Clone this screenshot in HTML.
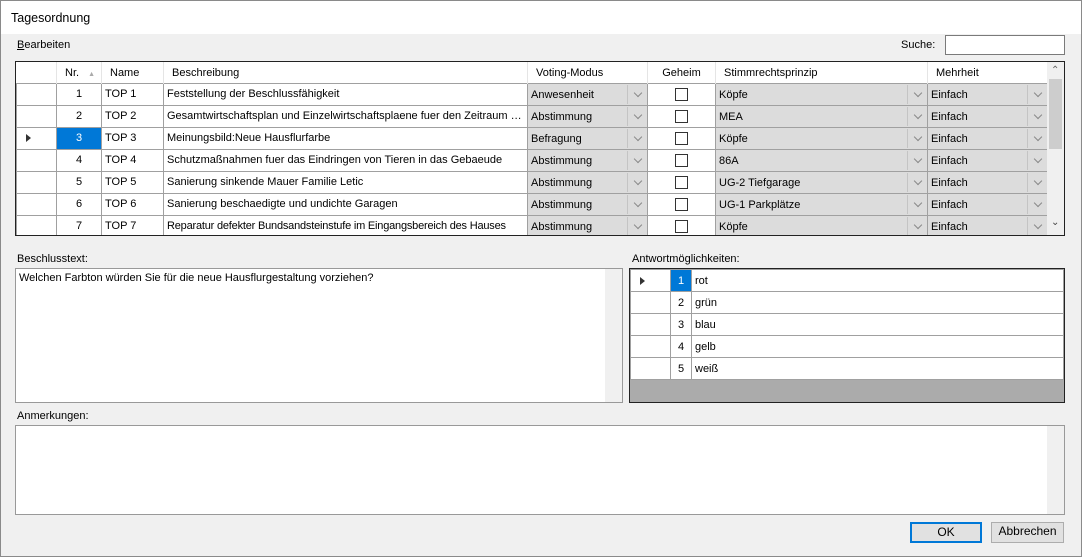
<!DOCTYPE html>
<html><head><meta charset="utf-8"><style>
*{box-sizing:border-box;margin:0;padding:0}
body{width:1082px;height:557px;background:#f0f0f0;font-family:"Liberation Sans",sans-serif;font-size:11px;color:#000;position:relative;overflow:hidden}
.a{position:absolute}
table{border-collapse:collapse;table-layout:fixed}
td{border:1px solid #a0a0a0;height:22px;padding:0 3px;white-space:nowrap;overflow:hidden;text-overflow:ellipsis;vertical-align:middle}
.dd{background:#dcdcdc;border:1px solid #a0a0a0;position:relative;padding:0}
.dd span{position:absolute;left:3px;top:5px}
.dd i{position:absolute;right:0;top:1px;bottom:1px;width:20px;border-left:1px solid #c4c4c4;background:#dcdcdc}
.dd i:after{content:"";position:absolute;left:7px;top:5px;width:5px;height:5px;border-right:1px solid #888;border-bottom:1px solid #888;transform:rotate(45deg)}
.cb{width:13px;height:13px;border:1px solid #333;background:#fff;margin:auto}
.hd td{border:none;border-right:1px solid #e5e5e5;height:21px;background:#fff;text-overflow:clip;padding-top:2px}
.sel{background:#0078d7;color:#fff}
.tri{width:0;height:0;border-left:5px solid #333;border-top:4px solid transparent;border-bottom:4px solid transparent;margin-left:6px}
.btn{border:1px solid #adadad;background:#e1e1e1;text-align:center;line-height:17px;font-size:12px}
</style></head><body>
<div class="a" style="left:0;top:0;width:1082px;height:34px;background:#fff"></div>
<div class="a" style="left:0;top:0;width:1082px;height:557px;border:1px solid #8a8a8a;z-index:5;pointer-events:none"></div>
<div class="a" style="left:11px;top:11px;font-size:12.5px">Tagesordnung</div>
<div class="a" style="left:17px;top:39px"><u>B</u>earbeiten</div>
<div class="a" style="left:901px;top:39px">Suche:</div>
<div class="a" style="left:945px;top:35px;width:120px;height:20px;background:#fff;border:1px solid #7a7a7a"></div>

<div class="a" style="left:15px;top:61px;width:1050px;height:175px;border:1px solid #222;background:#fff;overflow:hidden">
<table style="width:1031px">
<colgroup><col style="width:40px"><col style="width:45px"><col style="width:62px"><col style="width:364px"><col style="width:120px"><col style="width:68px"><col style="width:212px"><col style="width:120px"></colgroup>
<tr class="hd"><td></td><td style="padding-left:8px">Nr.<span style="color:#aaa;font-size:7px;margin-left:9px">▲</span></td><td style="padding-left:8px">Name</td><td style="padding-left:8px">Beschreibung</td><td style="padding-left:8px">Voting-Modus</td><td style="text-align:center">Geheim</td><td style="padding-left:8px">Stimmrechtsprinzip</td><td style="padding-left:8px">Mehrheit</td></tr>
<tr><td></td><td style="text-align:center">1</td><td>TOP 1</td><td>Feststellung der Beschlussfähigkeit</td><td class="dd"><span>Anwesenheit</span><i></i></td><td><div class="cb"></div></td><td class="dd"><span>Köpfe</span><i></i></td><td class="dd"><span>Einfach</span><i></i></td></tr>
<tr><td></td><td style="text-align:center">2</td><td>TOP 2</td><td>Gesamtwirtschaftsplan und Einzelwirtschaftsplaene fuer den Zeitraum 01.01.2021</td><td class="dd"><span>Abstimmung</span><i></i></td><td><div class="cb"></div></td><td class="dd"><span>MEA</span><i></i></td><td class="dd"><span>Einfach</span><i></i></td></tr>
<tr><td><div class="tri"></div></td><td class="sel" style="text-align:center">3</td><td>TOP 3</td><td>Meinungsbild:Neue Hausflurfarbe</td><td class="dd"><span>Befragung</span><i></i></td><td><div class="cb"></div></td><td class="dd"><span>Köpfe</span><i></i></td><td class="dd"><span>Einfach</span><i></i></td></tr>
<tr><td></td><td style="text-align:center">4</td><td>TOP 4</td><td>Schutzmaßnahmen fuer das Eindringen von Tieren in das Gebaeude</td><td class="dd"><span>Abstimmung</span><i></i></td><td><div class="cb"></div></td><td class="dd"><span>86A</span><i></i></td><td class="dd"><span>Einfach</span><i></i></td></tr>
<tr><td></td><td style="text-align:center">5</td><td>TOP 5</td><td>Sanierung sinkende Mauer Familie Letic</td><td class="dd"><span>Abstimmung</span><i></i></td><td><div class="cb"></div></td><td class="dd"><span>UG-2 Tiefgarage</span><i></i></td><td class="dd"><span>Einfach</span><i></i></td></tr>
<tr><td></td><td style="text-align:center">6</td><td>TOP 6</td><td>Sanierung beschaedigte und undichte Garagen</td><td class="dd"><span>Abstimmung</span><i></i></td><td><div class="cb"></div></td><td class="dd"><span>UG-1 Parkplätze</span><i></i></td><td class="dd"><span>Einfach</span><i></i></td></tr>
<tr><td></td><td style="text-align:center">7</td><td>TOP 7</td><td style="letter-spacing:-0.2px">Reparatur defekter Bundsandsteinstufe im Eingangsbereich des Hauses</td><td class="dd"><span>Abstimmung</span><i></i></td><td><div class="cb"></div></td><td class="dd"><span>Köpfe</span><i></i></td><td class="dd"><span>Einfach</span><i></i></td></tr>
</table>
<div class="a" style="left:1031px;top:0;width:17px;height:173px;background:#f0f0f0"></div>
<div class="a" style="left:1033px;top:17px;width:13px;height:70px;background:#cdcdcd"></div>
<div class="a" style="left:1035px;top:3px;font-size:10px;color:#666">⌃</div>
<div class="a" style="left:1035px;top:155px;font-size:10px;color:#444">⌄</div>
</div>

<div class="a" style="left:17px;top:253px">Beschlusstext:</div>
<div class="a" style="left:15px;top:268px;width:608px;height:135px;background:#fff;border:1px solid #999"><div style="padding:3px 3px">Welchen Farbton würden Sie für die neue Hausflurgestaltung vorziehen?</div>
<div class="a" style="right:0;top:0;width:17px;height:133px;background:#f0f0f0"></div></div>

<div class="a" style="left:632px;top:253px">Antwortmöglichkeiten:</div>
<div class="a" style="left:629px;top:268px;width:436px;height:135px;border:1px solid #222;background:#ababab">
<table style="width:434px;background:#fff">
<colgroup><col style="width:40px"><col style="width:21px"><col></colgroup>
<tr><td><div class="tri"></div></td><td class="sel" style="text-align:center">1</td><td>rot</td></tr>
<tr><td></td><td style="text-align:center">2</td><td>grün</td></tr>
<tr><td></td><td style="text-align:center">3</td><td>blau</td></tr>
<tr><td></td><td style="text-align:center">4</td><td>gelb</td></tr>
<tr><td></td><td style="text-align:center">5</td><td>weiß</td></tr>
</table></div>

<div class="a" style="left:17px;top:410px">Anmerkungen:</div>
<div class="a" style="left:15px;top:425px;width:1050px;height:90px;background:#fff;border:1px solid #999"><div class="a" style="right:0;top:0;width:17px;height:88px;background:#f0f0f0"></div></div>

<div class="a btn" style="left:910px;top:522px;width:72px;height:21px;border:2px solid #0078d7">OK</div>
<div class="a btn" style="left:991px;top:522px;width:73px;height:21px">Abbrechen</div>
</body></html>
